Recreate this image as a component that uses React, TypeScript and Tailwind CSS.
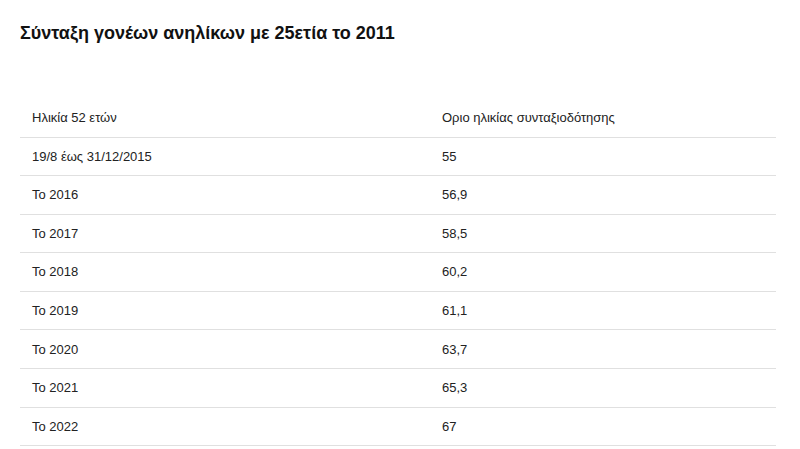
const rows: [string, string][] = [
  ['19/8 έως 31/12/2015', '55'],
  ['Το 2016', '56,9'],
  ['Το 2017', '58,5'],
  ['Το 2018', '60,2'],
  ['Το 2019', '61,1'],
  ['Το 2020', '63,7'],
  ['Το 2021', '65,3'],
  ['Το 2022', '67'],
]

const App = () => {
  return (
    <div className="w-[800px] h-[449px] bg-white overflow-hidden font-['Liberation_Sans',Arial,sans-serif] text-[#111]">
      <div className="px-5 pt-[22px]">
        <h1 className="text-[18px] leading-[22px] font-bold text-[#111]">
          Σύνταξη γονέων ανηλίκων με 25ετία το 2011
        </h1>

        {/* πίνακας */}
        <table className="mt-[55px] w-[756px] border-collapse text-[13px] text-[#222]">
          <thead>
            <tr className="border-b-[1.5px] border-[#e0e0e0]">
              <th className="w-[410px] h-[38px] px-3 text-left font-normal">Ηλικία 52 ετών</th>
              <th className="h-[38px] px-3 text-left font-normal">Οριο ηλικίας συνταξιοδότησης</th>
            </tr>
          </thead>
          <tbody>
            {rows.map(([year, age]) => (
              <tr key={year} className="border-b-[1.5px] border-[#e0e0e0]">
                <td className="h-[38.6px] px-3">{year}</td>
                <td className="h-[38.6px] px-3">{age}</td>
              </tr>
            ))}
          </tbody>
        </table>
      </div>
    </div>
  )
}

export default App
